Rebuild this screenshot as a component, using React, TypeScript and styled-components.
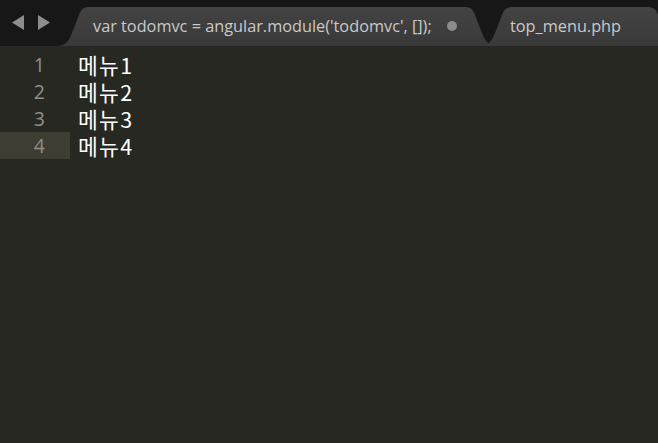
import * as React from 'react';
import styled, { createGlobalStyle } from 'styled-components';

const GlobalStyle = createGlobalStyle`
  html, body {
    margin: 0;
    padding: 0;
    background: #272822;
  }
  #root {
    width: 658px;
    height: 443px;
    overflow: hidden;
  }
`;

const Window = styled.div`
  width: 658px;
  height: 443px;
  display: flex;
  flex-direction: column;
  background: #272822;
  font-family: 'Open Sans', 'Noto Sans', sans-serif;
`;

const TabBar = styled.div`
  height: 46px;
  flex: none;
  display: flex;
  align-items: flex-end;
  background: #171717;
  overflow: hidden;
`;

const Nav = styled.div`
  width: 57px;
  height: 46px;
  flex: none;
  display: flex;
  align-items: center;
  gap: 12px;
  padding-left: 12px;
  padding-bottom: 1px;
  box-sizing: border-box;
`;

const TAB_H = 39;

const tabPath = (w: number) =>
  `M0,${TAB_H} C8,${TAB_H} 12,34 15,26 L22,8 C24,2 27,0 32,0 L${w - 32},0 C${w - 27},0 ${w - 24},2 ${w - 22},8 L${w - 15},26 C${w - 12},34 ${w - 8},${TAB_H} ${w},${TAB_H} Z`;

const Tab = styled.div<{ $w: number; $overlap?: number; $pad: number }>`
  width: ${(p) => p.$w}px;
  height: ${TAB_H}px;
  flex: none;
  margin-left: ${(p) => (p.$overlap ? -p.$overlap : 0)}px;
  background: linear-gradient(#434343, #393939);
  display: flex;
  align-items: center;
  padding-left: ${(p) => p.$pad}px;
  padding-bottom: 2px;
  box-sizing: border-box;
  color: #cacaca;
  font-size: 16.3px;
  white-space: nowrap;
`;

const Dot = styled.span`
  width: 10px;
  height: 10px;
  border-radius: 50%;
  background: #8c8c8c;
  margin-left: 15px;
  margin-top: 1px;
`;

const Editor = styled.div`
  flex: 1;
  padding-top: 5px;
  display: flex;
  flex-direction: column;
`;

const Line = styled.div`
  height: 27px;
  display: flex;
  align-items: center;
`;

const Gutter = styled.div<{ $current?: boolean }>`
  width: 70px;
  height: 100%;
  flex: none;
  background: ${(p) => (p.$current ? '#3e3d32' : 'transparent')};
  color: #8f908a;
  font-size: 19.5px;
  line-height: 27px;
  display: flex;
  align-items: center;
  justify-content: flex-end;
  padding-right: 25px;
  box-sizing: border-box;
`;

const Code = styled.div`
  padding-left: 8px;
  color: #ffffff;
  font-family: 'Noto Sans CJK KR', 'Noto Sans', sans-serif;
  font-size: 21.5px;
  line-height: 27px;
  letter-spacing: 1.3px;
`;

const Arrow = ({ dir }: { dir: 'left' | 'right' }) => (
  <svg width="13" height="15" viewBox="0 0 13 15">
    <path d={dir === 'left' ? 'M12,0 L12,15 L0,7.5 Z' : 'M1,0 L1,15 L13,7.5 Z'} fill="#8d8d8d" />
  </svg>
);

const lines = ['메뉴1', '메뉴2', '메뉴3', '메뉴4'];

export default function App() {
  return (
    <Window>
      <GlobalStyle />
      <TabBar>
        <Nav>
          <Arrow dir="left" />
          <Arrow dir="right" />
        </Nav>
        <Tab $w={440} $pad={36} style={{ clipPath: `path('${tabPath(440)}')` }}>
          var todomvc = angular.module('todomvc', []);
          <Dot />
        </Tab>
        <Tab $w={200} $overlap={17} $pad={30} style={{ clipPath: `path('${tabPath(200)}')` }}>
          top_menu.php
        </Tab>
      </TabBar>
      <Editor>
        {lines.map((text, i) => (
          <Line key={i}>
            <Gutter $current={i === 3}>{i + 1}</Gutter>
            <Code>{text}</Code>
          </Line>
        ))}
      </Editor>
    </Window>
  );
}
